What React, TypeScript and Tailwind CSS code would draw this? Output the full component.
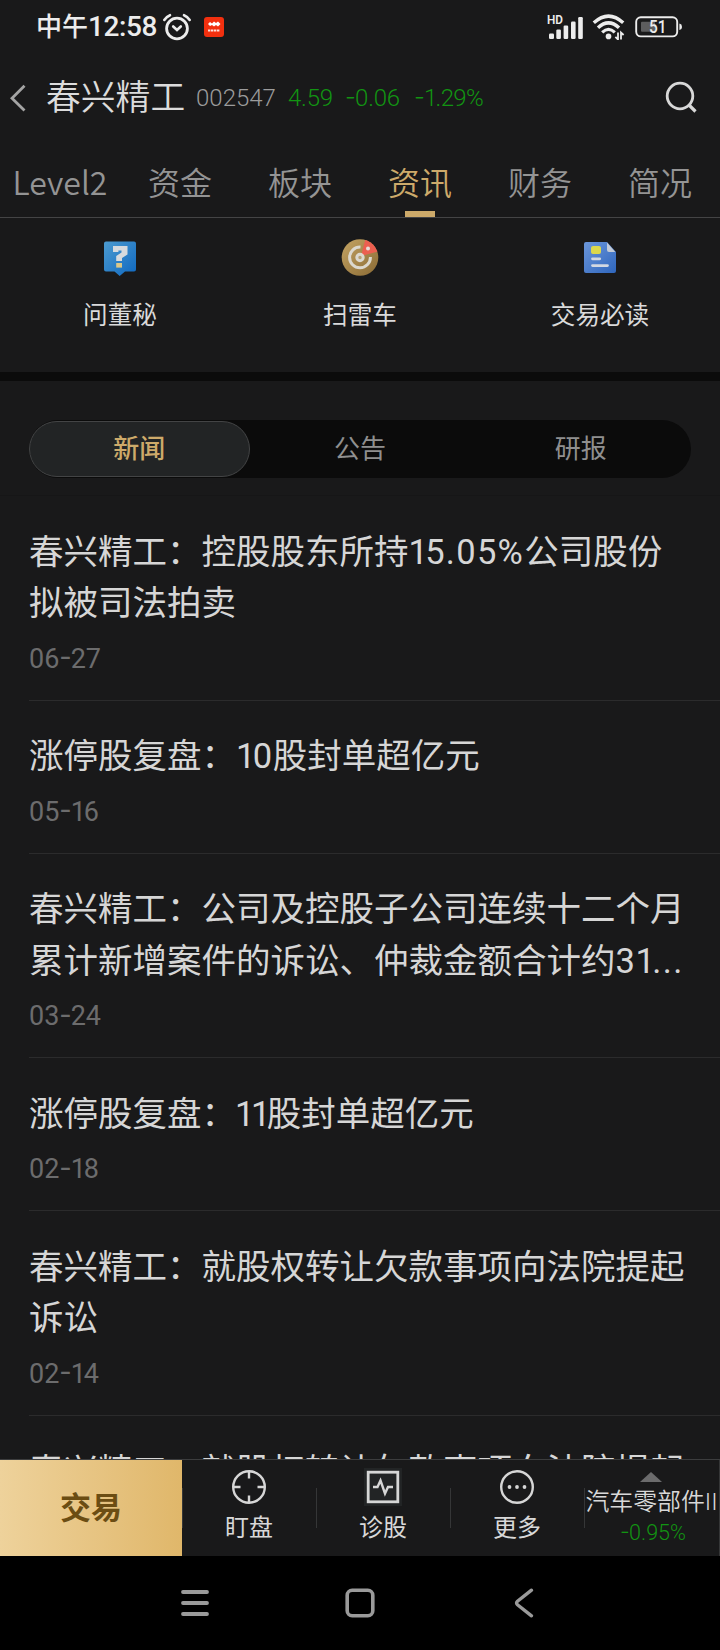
import React from "react";

const CJK = "font-['Roboto','Noto_Sans_CJK_SC',sans-serif]";

/* Spaces figures proportionally: narrow ones, slightly open others, raised hyphen. */
function Figures({ text }: { text: string }) {
  const parts = text.match(/11|1|-|\.\.\.|[02-9.%]+|[^0-9.%-]+/g) ?? [];
  return (
    <>
      {parts.map((p, i) => {
        if (p === "11") return <span key={i} className="-ml-[0.03em] tracking-[-0.1em]">11</span>;
        if (p === "1") return <span key={i} className="tracking-[-0.08em]">1</span>;
        if (p === "-") return <span key={i} className="relative -top-[0.04em] inline-block w-[0.42em] text-center font-['Inter',sans-serif]">-</span>;
        if (p === "...") return <span key={i} className="tracking-[0.04em]">...</span>;
        return <span key={i}>{p}</span>;
      })}
    </>
  );
}

function StatusBar() {
  return (
    <div className="flex h-[54px] items-center justify-between pl-[36px] pr-[38px] text-[#ececec]">
      <div className="flex items-center">
        <span className="flex w-[123px] items-baseline whitespace-nowrap leading-[54px] font-medium">
          <span className="text-[26px]">中午</span>
          <span className="text-[28px] tracking-[-0.4px]">12:58</span>
        </span>
        <svg width="30" height="28" viewBox="0 0 30 28" fill="none" stroke="currentColor" strokeLinecap="round" className="ml-[3px]">
          <circle cx="15" cy="15.5" r="10.4" strokeWidth="2.8" />
          <path d="M2.3 7 Q4.5 3.6 8 2.2 M27.7 7 Q25.5 3.6 22 2.2" strokeWidth="2.6" />
          <path d="M11.2 13.5 L15 17 L18.8 13.5" strokeWidth="2.6" />
        </svg>
        <svg width="20" height="20" viewBox="0 0 20 20" className="ml-[12px]">
          <rect width="20" height="20" rx="3" fill="#f2300f" />
          <path d="M4 7 L6 5 L8 6.5 L10 4.6 L12 6 L14 4.4 L16.5 7 L14 9.6 L12 8 L10 9.4 L8 8 L6 9 Z" fill="#fff" />
          <path d="M4 13.4 H16" stroke="#fff" strokeWidth="2" strokeDasharray="2.4 .6" opacity=".85" />
        </svg>
      </div>
      <div className="flex items-center">
        <svg width="36" height="26" viewBox="0 0 36 26" fill="currentColor">
          <text x="0" y="10" fontSize="12" fontWeight="600" fontFamily="Roboto" textLength="16" lengthAdjust="spacingAndGlyphs">HD</text>
          <rect x="2" y="19.5" width="5" height="5.5" rx="1.2" />
          <rect x="9.3" y="15.5" width="4.6" height="9.5" rx="1.2" />
          <rect x="16.6" y="11.5" width="4.6" height="13.5" rx="1.2" />
          <rect x="24" y="7.5" width="4.6" height="17.5" rx="1.2" />
          <rect x="31.2" y="3" width="4.6" height="22" rx="1.2" />
        </svg>
        <svg width="34" height="26" viewBox="0 0 34 26" fill="none" stroke="currentColor" className="ml-[9px]">
          <path d="M1.8 8.8 Q16.5 -4.6 31.2 8.8" strokeWidth="3.4" />
          <path d="M6 13.8 Q16.5 4 27 13.8" strokeWidth="3.4" />
          <path d="M10.2 18.4 Q16.5 12.4 22.8 18.4" strokeWidth="3.2" />
          <circle cx="16.5" cy="22.4" r="2.8" fill="currentColor" stroke="none" />
          <path d="M26 18.5 V25.5 L23.4 22.8 M29 25.5 V18.5 L31.6 21" strokeWidth="1.8" />
        </svg>
        <svg width="47" height="22" viewBox="0 0 47 22" className="ml-[9px]">
          <rect x="1.2" y="1.2" width="41" height="19.2" rx="4.6" fill="none" stroke="currentColor" strokeWidth="1.9" />
          <rect x="6" y="5.8" width="14" height="10" rx="1" fill="#5d5d5e" />
          <path d="M44.4 7.5 Q47 8 47 10.8 Q47 13.6 44.4 14 Z" fill="currentColor" />
          <text x="14" y="17" fontSize="17.5" fontWeight="500" fontFamily="Roboto" fill="currentColor" textLength="17.5" lengthAdjust="spacingAndGlyphs">51</text>
        </svg>
      </div>
    </div>
  );
}

function Header() {
  return (
    <div className="flex h-[86px] items-center pl-[10px] pr-[23px]">
      <svg width="16" height="28" viewBox="0 0 16 28" fill="none" stroke="#a4a4a4" strokeWidth="2.8" className="relative top-px">
        <path d="M14.5 1.8 L2 14.2 L14.5 26.6" />
      </svg>
      <span className="ml-[20px] w-[150px] whitespace-nowrap pt-[3px] text-[34.8px] font-[350] text-[#dcdcdc]">春兴精工</span>
      <span className="w-[92px] pt-px text-[24px] font-[350] text-[#9c9c9c]">002547</span>
      <span className="w-[57px] pt-px text-[24px] font-[350] tracking-[-0.2px] text-[#129412]">4.59</span>
      <span className="w-[69px] whitespace-nowrap pt-px text-[24px] font-[350] tracking-[-0.2px] text-[#129412]"><Figures text="-0.06" /></span>
      <span className="whitespace-nowrap pt-px text-[24px] font-[350] tracking-[-0.6px] text-[#129412]"><Figures text="-1.29%" /></span>
      <svg width="32" height="32" viewBox="0 0 32 32" fill="none" stroke="#d8d8d8" strokeWidth="2.8" className="ml-auto">
        <circle cx="15" cy="15" r="12.8" />
        <path d="M23.5 23.5 L30.5 30.5" strokeWidth="3.2" />
      </svg>
    </div>
  );
}

const tabs = ["Level2", "资金", "板块", "资讯", "财务", "简况"];

function Tabs() {
  return (
    <div className="grid h-[78px] grid-cols-6 border-b border-[#444445]">
      {tabs.map((t) => (
        <div
          key={t}
          className={
            "relative flex items-center justify-center pt-[4px] text-[32px] font-[350] font-['Noto_Sans_CJK_SC',sans-serif] " +
            (t === "资讯" ? "text-[#cdaa6a]" : "text-[#949494]")
          }
        >
          {t}
          {t === "资讯" && <span className="absolute bottom-0 left-[45px] h-[6px] w-[30px] bg-[#cdaa6a]" />}
        </div>
      ))}
    </div>
  );
}

function AskIcon() {
  return (
    <svg width="40" height="40" viewBox="0 0 40 40">
      <defs>
        <linearGradient id="ask" x1="0" y1="0" x2="1" y2="1">
          <stop offset="0" stopColor="#4c9bd0" />
          <stop offset="1" stopColor="#0f68c0" />
        </linearGradient>
      </defs>
      <path d="M6 4.5 H34 Q36 4.5 36 6.5 V32.5 Q36 34.5 34 34.5 H25 L19.7 39 L14.5 34.5 H6 Q4 34.5 4 32.5 V6.5 Q4 4.5 6 4.5 Z" fill="url(#ask)" />
      <path d="M13 9 H27.5 V17.5 L22 21 V24 H16.2 V19 L21.5 15.6 V13.6 H18.4 V15 H13 Z" fill="#d6dade" />
      <rect x="16.2" y="26" width="5.8" height="4.6" fill="#dcc888" />
    </svg>
  );
}

function RadarIcon() {
  return (
    <svg width="40" height="40" viewBox="0 0 40 40">
      <defs>
        <linearGradient id="radar" x1="0" y1="0" x2="1" y2="1">
          <stop offset="0" stopColor="#c4a464" />
          <stop offset="1" stopColor="#8a6a34" />
        </linearGradient>
        <clipPath id="disc"><circle cx="20" cy="20.5" r="18.3" /></clipPath>
      </defs>
      <circle cx="20" cy="20.5" r="18.3" fill="url(#radar)" />
      <path d="M21 19 L26 0 L40 4 L40 14 Z" fill="#ec5f50" clipPath="url(#disc)" />
      <path d="M20.5 10 A10.4 10.4 0 1 0 30.4 20" fill="none" stroke="#dcd8ce" strokeWidth="3" />
      <circle cx="20" cy="20.5" r="3.2" fill="#b8a274" stroke="#dcd8ce" strokeWidth="3" />
      <circle cx="28" cy="11.5" r="2" fill="#e8dcd8" />
    </svg>
  );
}

function DocIcon() {
  return (
    <svg width="40" height="40" viewBox="0 0 40 40">
      <defs>
        <linearGradient id="doc" x1="0" y1="0" x2="1" y2="1">
          <stop offset="0" stopColor="#6b96da" />
          <stop offset="1" stopColor="#2f66bd" />
        </linearGradient>
      </defs>
      <path d="M6 5 H27 L36 15 V34 Q36 36 34 36 H6 Q4 36 4 34 V7 Q4 5 6 5 Z" fill="url(#doc)" />
      <path d="M27 5.5 L35.3 15 H29 Q27 15 27 13 Z" fill="#c2cad6" />
      <rect x="11" y="9" width="10" height="8" rx="2" fill="#dcd84c" />
      <path d="M12.5 21.8 H19.7 M12.5 28.6 H27.5" stroke="#d2d8e2" strokeWidth="2.8" strokeLinecap="round" />
    </svg>
  );
}

function Shortcuts() {
  const items = [
    { label: "问董秘", icon: <AskIcon /> },
    { label: "扫雷车", icon: <RadarIcon /> },
    { label: "交易必读", icon: <DocIcon /> },
  ];
  return (
    <div className="grid h-[163px] grid-cols-3 border-b-[9px] border-[#0b0b0b] pt-[19px]">
      {items.map((i) => (
        <div key={i.label} className="flex flex-col items-center">
          {i.icon}
          <span className="mt-[21px] text-[24.6px] leading-[36px] text-[#dadada]">{i.label}</span>
        </div>
      ))}
    </div>
  );
}

function Segments() {
  return (
    <div className="h-[115px] border-b border-[#161617] px-[29px] pt-[39px]">
      <div className="grid h-[58px] grid-cols-3 rounded-full bg-[#0b0b0b] py-px text-[26px] text-[#8f8f8f]">
        <div className="flex items-center justify-center rounded-full border border-[#434445] bg-[#222425] font-medium text-[#cdaa6a]">新闻</div>
        <div className="flex items-center justify-center">公告</div>
        <div className="flex items-center justify-center">研报</div>
      </div>
    </div>
  );
}

const news: { lines: string[]; date: string }[] = [
  { lines: ["春兴精工：控股股东所持15.05%公司股份", "拟被司法拍卖"], date: "06-27" },
  { lines: ["涨停股复盘：10股封单超亿元"], date: "05-16" },
  { lines: ["春兴精工：公司及控股子公司连续十二个月", "累计新增案件的诉讼、仲裁金额合计约31..."], date: "03-24" },
  { lines: ["涨停股复盘：11股封单超亿元"], date: "02-18" },
  { lines: ["春兴精工：就股权转让欠款事项向法院提起", "诉讼"], date: "02-14" },
  { lines: ["春兴精工：就股权转让欠款事项向法院提起"], date: "" },
];

/* Headline text: Chinese runs keep their em box, figures are set a little wider. */
function Headline({ text }: { text: string }) {
  const runs = text.match(/[0-9.%]+|[^0-9.%]+/g) ?? [];
  return (
    <div className="h-[51.5px] whitespace-nowrap text-[34.5px] leading-[51.5px] text-[#d6d6d6]">
      {runs.map((r, i) =>
        /^[0-9]/.test(r) ? (
          <span key={i} className={r.includes("%") ? "tracking-[1.3px]" : "tracking-[0.7px]"}>
            <Figures text={r} />
          </span>
        ) : (
          <span key={i}>{r}</span>
        ),
      )}
    </div>
  );
}

function NewsList() {
  return (
    <div className="min-h-0 flex-1 overflow-hidden pl-[29px]">
      {news.map((n, i) => (
        <div key={i} className="border-b border-[#2b2b2c] pt-[30.5px]">
          {n.lines.map((l) => (
            <Headline key={l} text={l} />
          ))}
          <div className="mt-[9px] h-[61px] text-[27px] leading-[40px] text-[#6c6c6d]"><Figures text={n.date} /></div>
        </div>
      ))}
    </div>
  );
}

function Tool({ label, children }: { label: string; children: React.ReactNode }) {
  return (
    <div className="relative flex w-[134px] flex-col items-center pt-[8px]">
      <span className="absolute top-[28px] left-0 h-[40px] w-px bg-[#353637]" />
      {children}
      <span className="mt-[4px] text-[24px] leading-[36px] text-[#d8d8d8]">{label}</span>
    </div>
  );
}

function BottomBar() {
  return (
    <div className="flex h-[97px] border-t border-[#3c3d3e]">
      <div className="flex w-[182px] items-center justify-center bg-linear-to-r from-[#eed29b] to-[#e0b76a] pt-[2px] text-[31px] font-bold text-[#6b4d13]">交易</div>
      <Tool label="盯盘">
        <svg width="38" height="38" viewBox="0 0 38 38" fill="none" stroke="#d6d6d6" strokeWidth="2.4">
          <circle cx="19" cy="19" r="15.8" />
          <path d="M19 3 V10.5 M19 27.5 V35 M3 19 H10.5 M27.5 19 H35" />
        </svg>
      </Tool>
      <Tool label="诊股">
        <svg width="38" height="38" viewBox="0 0 38 38" fill="none" stroke="#d6d6d6">
          <rect width="38" height="38" fill="#222425" stroke="none" />
          <rect x="4.2" y="4.2" width="29.6" height="29.6" strokeWidth="2.8" />
          <path d="M9 19 H13.5 L16.5 12.5 L21 25.5 L24 19 H29" strokeWidth="2.4" />
        </svg>
      </Tool>
      <Tool label="更多">
        <svg width="38" height="38" viewBox="0 0 38 38" fill="none" stroke="#d6d6d6" strokeWidth="2.4">
          <circle cx="19" cy="19" r="15.8" />
          <g fill="#d6d6d6" stroke="none">
            <circle cx="11.5" cy="19" r="1.9" />
            <circle cx="19" cy="19" r="1.9" />
            <circle cx="26.5" cy="19" r="1.9" />
          </g>
        </svg>
      </Tool>
      <div className="relative flex w-[136px] flex-col items-center border-r border-[#353637] pt-[12px]">
        <span className="absolute top-[28px] left-0 h-[40px] w-px bg-[#353637]" />
        <svg width="22" height="10" viewBox="0 0 22 10" className="mr-[2px]"><path d="M11 0 L22 10 H0 Z" fill="#6b6b6c" /></svg>
        <span className="mt-[2px] whitespace-nowrap text-[23.9px] leading-[36px] font-[350] text-[#d8d8d8]">汽车零部件II</span>
        <span className="ml-[3px] text-[21.5px] leading-[24px] font-[350] text-[#129412]"><Figures text="-0.95%" /></span>
      </div>
    </div>
  );
}

function SystemNav() {
  return (
    <div className="flex h-[94px] items-center bg-black pl-[180px]">
      <svg width="30" height="32" viewBox="0 0 30 32" stroke="#9a9a9a" strokeWidth="3.8" strokeLinecap="round">
        <path d="M3 5 H27 M3 16 H27 M3 27 H27" />
      </svg>
      <svg width="32" height="32" viewBox="0 0 32 32" fill="none" stroke="#9a9a9a" strokeWidth="3.6" className="ml-[134px]">
        <rect x="3.2" y="3.2" width="25.6" height="25.6" rx="5" />
      </svg>
      <svg width="22" height="32" viewBox="0 0 22 32" fill="none" stroke="#9a9a9a" strokeWidth="3.4" strokeLinecap="round" className="ml-[137px]">
        <path d="M18.5 3.2 L4.5 14.2 Q2.6 16 4.5 17.8 L18.5 28.8" />
      </svg>
    </div>
  );
}

export default function App() {
  return (
    <div className={"flex h-[1650px] w-[720px] flex-col overflow-hidden bg-[#19191a] " + CJK}>
      <StatusBar />
      <Header />
      <Tabs />
      <Shortcuts />
      <Segments />
      <NewsList />
      <BottomBar />
      <SystemNav />
    </div>
  );
}
